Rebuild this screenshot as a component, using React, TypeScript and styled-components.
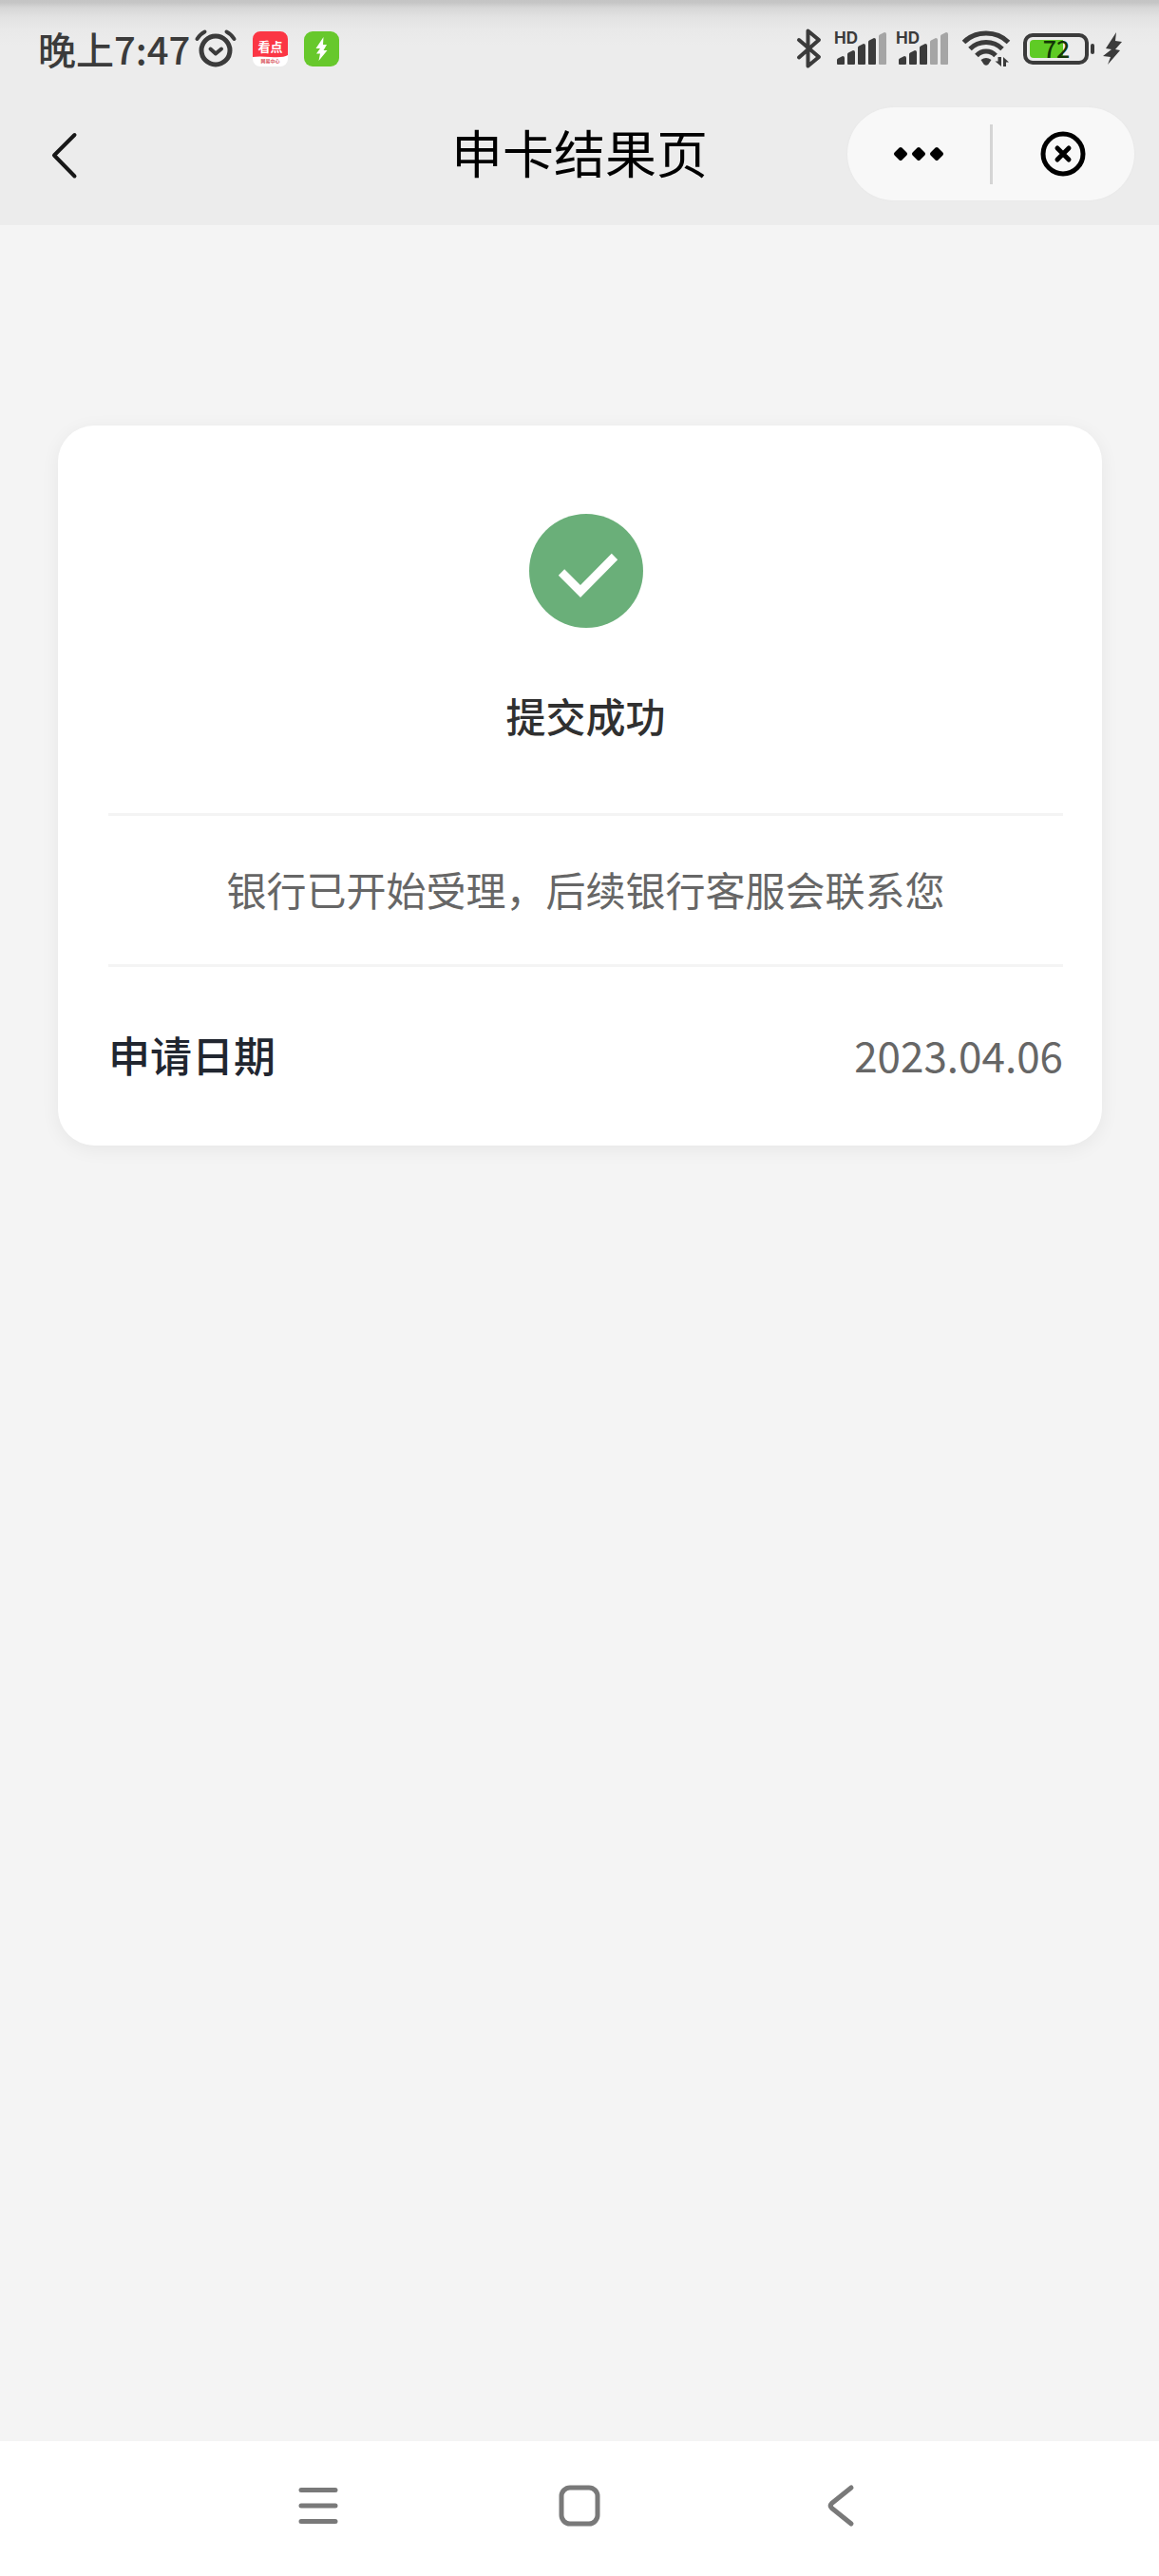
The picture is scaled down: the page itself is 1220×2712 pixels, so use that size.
import React from 'react';
import styled, { createGlobalStyle } from 'styled-components';

const GlobalStyle = createGlobalStyle`
  * { box-sizing: border-box; }
  html, body { margin: 0; background: #f4f4f4; }
  body { font-family: "Noto Sans CJK SC", "Noto Sans", sans-serif; }
  h1, h2, p, dl, dt, dd { margin: 0; font-weight: 400; }
  svg { display: block; flex: none; overflow: visible; }
`;

const Screen = styled.div`
  min-height: 100vh;
  display: flex;
  flex-direction: column;
  background: #f4f4f4;
`;

const Top = styled.header`
  background: linear-gradient(#c4c4c4 0, #c6c6c6 3px, #d6d6d6 8px, #e2e2e2 18px, #e9e9e9 32px, #ececec 48px);
`;

const StatusBar = styled.div`
  height: 102px;
  padding: 0 39px 0 40px;
  display: flex;
  justify-content: space-between;
  align-items: center;
  color: #3b3b3b;
`;

const StatusGroup = styled.div<{ $gap: number }>`
  display: flex;
  align-items: center;
  gap: ${(p) => p.$gap}px;
`;

const Clock = styled.time`
  font-size: 40px;
  line-height: 48px;
  font-weight: 500;
`;

const NavBar = styled.div`
  display: grid;
  grid-template-columns: 1fr auto 1fr;
  align-items: center;
  height: 135px;
  padding: 0 26px 15px;
`;

const IconButton = styled.button`
  display: flex;
  align-items: center;
  justify-content: center;
  padding: 0;
  border: 0;
  background: none;
  color: inherit;
`;

const BackButton = styled(IconButton)`
  width: 84px;
  height: 84px;
`;

const Title = styled.h1`
  padding-bottom: 4px;
  font-size: 54px;
  line-height: 64px;
  color: #000;
`;

const Capsule = styled.div`
  justify-self: end;
  display: flex;
  align-items: center;
  width: 302px;
  height: 98px;
  border-radius: 49px;
  background: #f8f8f8;
  box-shadow: 0 0 2px #e4e4e4;
  color: #000;
`;

const CapsuleButton = styled(IconButton)`
  flex: 1;
  height: 100%;
`;

const CapsuleDivider = styled.span`
  width: 3px;
  height: 63px;
  background: #d5d5d5;
`;

const Content = styled.main`
  flex: 1;
  padding: 211px 60px 0 61px;
`;

const Card = styled.section`
  padding: 93px 41px 0 53px;
  border-radius: 38px;
  background: #fff;
  box-shadow: 0 4px 20px rgba(0, 0, 0, 0.06);
`;

const Result = styled.div`
  display: flex;
  flex-direction: column;
  align-items: center;
  gap: 60px;
  padding-bottom: 71px;
`;

const ResultTitle = styled.h2`
  font-size: 42px;
  line-height: 64px;
  font-weight: 500;
  color: #303030;
`;

const Message = styled.p`
  padding: 45px 0 47px;
  border: solid #f4f4f4;
  border-width: 3px 0;
  font-size: 42px;
  line-height: 64px;
  text-align: center;
  color: #666;
`;

const Details = styled.dl`
  display: flex;
  justify-content: space-between;
  padding: 60px 0 64px;
  font-size: 44px;
  line-height: 64px;
`;

const Label = styled.dt`
  font-weight: 500;
  color: #212630;
`;

const Value = styled.dd`
  color: #666;
`;

const SystemNav = styled.nav`
  display: flex;
  justify-content: center;
  gap: 191px;
  padding-bottom: 6px;
  height: 142px;
  background: #fff;
  color: #797979;
`;

const SystemButton = styled(IconButton)`
  width: 84px;
`;

const AlarmIcon = () => (
  <svg width="44" height="40" viewBox="0 0 44 40" fill="none" stroke="currentColor" strokeLinecap="round" aria-hidden="true">
    <circle cx="22" cy="22" r="15" strokeWidth="5" />
    <path d="M16.5 20.500l5.500 5 6-5" strokeWidth="4" strokeLinejoin="round" />
    <path d="M2.500 10Q5.500 5 10.500 2.500M33.500 2.500Q38.500 5 41.500 10" strokeWidth="4" />
  </svg>
);

const NewsIcon = () => (
  <svg width="37" height="37" viewBox="0 0 37 37" aria-hidden="true">
    <rect width="37" height="37" rx="8" fill="#fff" />
    <path d="M0 27V8a8 8 0 0 1 8-8h21a8 8 0 0 1 8 8v17Q32 28 19 27T0 27z" fill="#fb3644" />
    <text x="18.500" y="21" fontSize="13" fontWeight="700" textAnchor="middle" fill="#fff">看点</text>
    <text x="18.500" y="33" fontSize="5" fontWeight="700" textAnchor="middle" fill="#d8525c">网易中心</text>
  </svg>
);

const ChargeAppIcon = () => (
  <svg width="37" height="37" viewBox="0 0 37 37" aria-hidden="true">
    <rect width="37" height="37" rx="9" fill="#67c82c" />
    <path d="M20.500 6l-8 12h4.500l-4 5.500h4l-1.500 7.500 9-11h-4l3.500-6h-4z" fill="#fff" />
  </svg>
);

const BluetoothIcon = () => (
  <svg width="26" height="42" viewBox="0 0 26 42" fill="none" stroke="currentColor" strokeWidth="4" strokeLinejoin="round" strokeLinecap="round" aria-hidden="true">
    <path d="M2 12l21 18-11.500 9.500V2.500L23 12 2 30.500" />
  </svg>
);

const SignalIcon = ({ level }: { level: number }) => (
  <svg width="55" height="36" viewBox="0 0 55 36" fill="currentColor" aria-hidden="true">
    <text x="-1" y="13" fontSize="17" fontWeight="700" fontFamily="Inter, sans-serif">HD</text>
    {[8, 14, 21, 27, 33].map((h, i) => (
      <path
        key={h}
        d={`M${2 + i * 11} 34V${38 - h}q0-1 1-1.500l5-2.500q2 0 2 2V34q0 1-1 1h-6q-1 0-1-1z`}
        fill={i < level ? 'currentColor' : '#a5a5a5'}
      />
    ))}
  </svg>
);

const WifiIcon = () => (
  <svg width="50" height="38" viewBox="0 0 50 38" fill="none" stroke="currentColor" aria-hidden="true">
    <path d="M1.500 12.500Q11 3 25 3t23.500 9.500" strokeWidth="5" />
    <path d="M8 19.500Q15 12.500 25 12.500t17 7" strokeWidth="5" />
    <path d="M15 26.500Q19 22 25 22t10 4.500" strokeWidth="5" />
    <path d="M19.500 31q5.500-4 11 0l-3 4.500q-2.500 2.500-5 0z" fill="currentColor" stroke="none" />
    <path d="M41 28v10l-6.500-5.500h3V28zM43 38V28l6 5.500h-3V38z" fill="currentColor" stroke="none" />
  </svg>
);

const BatteryIcon = () => (
  <svg width="76" height="34" viewBox="0 0 76 34" aria-label="72%" role="img">
    <rect x="2" y="3" width="65" height="29" rx="8" fill="none" stroke="currentColor" strokeWidth="4" />
    <path d="M11 8h31v19H11q-4 0-4-4V12q0-4 4-4z" fill="#5fcb25" />
    <rect x="71" y="12" width="4" height="11" rx="2" fill="currentColor" />
    <text x="35" y="27" fontSize="25" fontWeight="500" textAnchor="middle" fill="#123606">72</text>
  </svg>
);

const BoltIcon = () => (
  <svg width="20" height="34" viewBox="0 0 20 34" fill="currentColor" aria-hidden="true">
    <path d="M14 0L3 17l6 1-9 7 8 1-3 8 13-15-5-1 7-8-7-1z" />
  </svg>
);

const ChevronIcon = () => (
  <svg width="28" height="50" viewBox="0 0 28 50" fill="none" stroke="#181818" strokeWidth="4" strokeLinecap="round" strokeLinejoin="round" aria-hidden="true">
    <path d="M24.500 5L3 26.500 24.500 48.500" />
  </svg>
);

const MoreIcon = () => (
  <svg width="54" height="16" viewBox="0 0 54 16" fill="currentColor" stroke="currentColor" strokeWidth="4" strokeLinejoin="round" aria-hidden="true">
    {[8, 27, 46].map((x) => (
      <path key={x} d={`M${x - 5} 8l5-5 5 5-5 5z`} />
    ))}
  </svg>
);

const CloseIcon = () => (
  <svg width="48" height="48" viewBox="0 0 48 48" fill="none" stroke="currentColor" strokeWidth="5" strokeLinecap="round" aria-hidden="true">
    <circle cx="24" cy="24" r="21" />
    <path d="M18 18l12 12M30 18L18 30" />
  </svg>
);

const SuccessIcon = () => (
  <svg width="120" height="120" viewBox="0 0 120 120" aria-hidden="true">
    <circle cx="60" cy="60" r="60" fill="#6aaf79" />
    <path d="M34 61.500l20 20 36-36.500" fill="none" stroke="#fff" strokeWidth="9" />
  </svg>
);

const MenuIcon = () => (
  <svg width="42" height="40" viewBox="0 0 42 40" fill="none" stroke="currentColor" strokeWidth="5" strokeLinecap="round" aria-hidden="true">
    <path d="M3 3.500h36M3 20h36M3 36.500h36" />
  </svg>
);

const HomeIcon = () => (
  <svg width="44" height="44" viewBox="0 0 44 44" fill="none" stroke="currentColor" strokeWidth="5" aria-hidden="true">
    <rect x="3" y="3" width="38" height="38" rx="9" />
  </svg>
);

const SystemBackIcon = () => (
  <svg width="28" height="44" viewBox="0 0 28 44" fill="none" stroke="currentColor" strokeWidth="5" strokeLinecap="round" strokeLinejoin="round" aria-hidden="true">
    <path d="M25 3L4.500 19.500q-2.500 2.500 0 5L25 41" />
  </svg>
);

export default function App() {
  return (
    <Screen>
      <GlobalStyle />
      <Top>
        <StatusBar>
          <StatusGroup $gap={17}>
            <StatusGroup $gap={5}>
              <Clock>晚上7:47</Clock>
              <AlarmIcon />
            </StatusGroup>
            <NewsIcon />
            <ChargeAppIcon />
          </StatusGroup>
          <StatusGroup $gap={14}>
            <BluetoothIcon />
            <StatusGroup $gap={10}>
              <SignalIcon level={4} />
              <SignalIcon level={3} />
            </StatusGroup>
            <WifiIcon />
            <StatusGroup $gap={8}>
              <BatteryIcon />
              <BoltIcon />
            </StatusGroup>
          </StatusGroup>
        </StatusBar>
        <NavBar>
          <BackButton type="button" aria-label="返回">
            <ChevronIcon />
          </BackButton>
          <Title>申卡结果页</Title>
          <Capsule>
            <CapsuleButton type="button" aria-label="更多">
              <MoreIcon />
            </CapsuleButton>
            <CapsuleDivider />
            <CapsuleButton type="button" aria-label="关闭">
              <CloseIcon />
            </CapsuleButton>
          </Capsule>
        </NavBar>
      </Top>
      <Content>
        <Card>
          <Result>
            <SuccessIcon />
            <ResultTitle>提交成功</ResultTitle>
          </Result>
          <Message>银行已开始受理，后续银行客服会联系您</Message>
          <Details>
            <Label>申请日期</Label>
            <Value>2023.04.06</Value>
          </Details>
        </Card>
      </Content>
      <SystemNav>
        <SystemButton type="button" aria-label="菜单">
          <MenuIcon />
        </SystemButton>
        <SystemButton type="button" aria-label="主页">
          <HomeIcon />
        </SystemButton>
        <SystemButton type="button" aria-label="返回上一页">
          <SystemBackIcon />
        </SystemButton>
      </SystemNav>
    </Screen>
  );
}
